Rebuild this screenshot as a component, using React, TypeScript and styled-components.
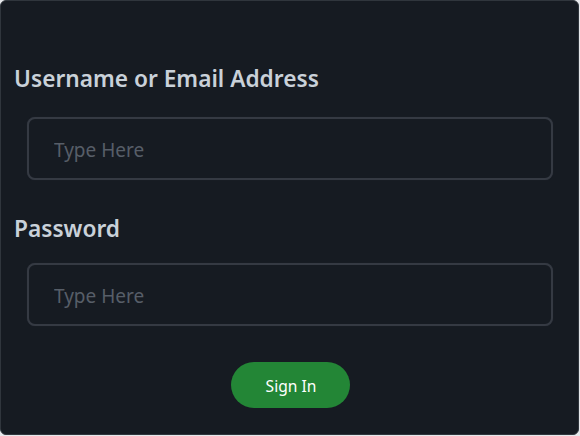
import React from "react";
import styled, { createGlobalStyle } from "styled-components";

const Global = createGlobalStyle`
  html, body { margin: 0; padding: 0; background: #e6e8eb; }
  body { font-family: "Noto Sans", "Open Sans", sans-serif; }
  * { box-sizing: border-box; }
`;

const Card = styled.form`
  width: 579px;
  height: 435px;
  background: #161b22;
  border: 1px solid #30363d;
  border-radius: 6px;
  padding: 63px 13px 0 13px;
  display: flex;
  flex-direction: column;
`;

const Label = styled.label<{ $gap: number }>`
  display: block;
  color: #c9d1d9;
  font-size: 22.7px;
  font-weight: 600;
  line-height: 30px;
  margin: 0 0 ${(p) => p.$gap}px 0;
`;

const Input = styled.input`
  display: block;
  margin: 0 12px 0 13px;
  height: 63px;
  background: #161b22;
  border: 2px solid #353a43;
  border-radius: 8px;
  box-shadow: 0 0 1px 0 #2a2f37;
  padding: 2px 25px 0 25px;
  font-family: inherit;
  font-size: 19px;
  color: #c9d1d9;
  outline: none;
  &::placeholder { color: #575e68; }
`;

const Field = styled.div<{ $after: number }>`
  display: flex;
  flex-direction: column;
  margin-bottom: ${(p) => p.$after}px;
`;

const Actions = styled.div`
  display: flex;
  justify-content: center;
  padding-left: 1px;
  padding-top: 1px;
`;

const Button = styled.button`
  width: 119px;
  height: 46px;
  border: none;
  border-radius: 23px;
  background: #238636;
  color: #ffffff;
  font-family: inherit;
  font-size: 15.6px;
  font-weight: 400;
  padding: 1px 0 0 2px;
  cursor: pointer;
`;

export default function App() {
  return (
    <>
      <Global />
      <Card onSubmit={(e) => e.preventDefault()}>
        <Field $after={34}>
          <Label $gap={23}>Username or Email Address</Label>
          <Input placeholder="Type Here" />
        </Field>
        <Field $after={35}>
          <Label $gap={19}>Password</Label>
          <Input type="password" placeholder="Type Here" />
        </Field>
        <Actions>
          <Button type="submit">Sign In</Button>
        </Actions>
      </Card>
    </>
  );
}
